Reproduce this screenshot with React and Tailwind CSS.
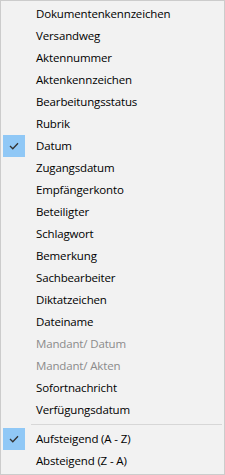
import React from "react";

const items = [
  { t: "Dokumentenkennzeichen" },
  { t: "Versandweg" },
  { t: "Aktennummer" },
  { t: "Aktenkennzeichen" },
  { t: "Bearbeitungsstatus" },
  { t: "Rubrik" },
  { t: "Datum", checked: true },
  { t: "Zugangsdatum" },
  { t: "Empfängerkonto" },
  { t: "Beteiligter" },
  { t: "Schlagwort" },
  { t: "Bemerkung" },
  { t: "Sachbearbeiter" },
  { t: "Diktatzeichen" },
  { t: "Dateiname" },
  { t: "Mandant/ Datum", disabled: true },
  { t: "Mandant/ Akten", disabled: true },
  { t: "Sofortnachricht" },
  { t: "Verfügungsdatum" },
];

const sort = [
  { t: "Aufsteigend (A - Z)", checked: true },
  { t: "Absteigend (Z - A)" },
];

function Check() {
  return (
    <svg width="10" height="8" viewBox="0 0 10 8" fill="none">
      <path d="M1 4 L3.8 6.8 L9 1.2" stroke="#333" strokeWidth="1.3" />
    </svg>
  );
}

function Row({ t, checked, disabled }) {
  return (
    <div className="flex h-[22px] items-center">
      <div className="w-[32px] h-[22px] flex items-center justify-start pl-[2px]">
        {checked ? (
          <div className="w-[22px] h-[22px] bg-[#90c8f6] flex items-center justify-center">
            <Check />
          </div>
        ) : null}
      </div>
      <span
        className={
          "pl-[3px] text-[11.5px] tracking-[-0.15px] leading-none whitespace-nowrap " +
          (disabled ? "text-[#8b8b8b]" : "text-[#000]")
        }
      >
        {t}
      </span>
    </div>
  );
}

export default function App() {
  return (
    <div
      className="w-[225px] h-[475px] border border-[#cccccc] bg-[#f2f2f2] py-[2px] box-border"
      style={{ fontFamily: '"Open Sans", "Noto Sans", sans-serif' }}
    >
      {items.map((it) => (
        <Row key={it.t} {...it} />
      ))}
      <div className="h-[7px] flex items-center pl-[30px] pr-[2px]">
        <div className="h-px w-full bg-[#d7d7d7]" />
      </div>
      {sort.map((it) => (
        <Row key={it.t} {...it} />
      ))}
    </div>
  );
}
